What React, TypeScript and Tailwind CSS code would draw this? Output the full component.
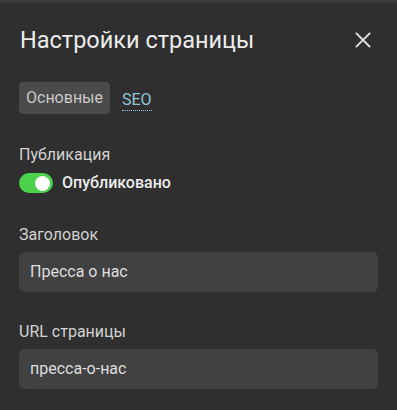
import React from "react";

export default function App() {
  return (
    <div className="w-[397px] h-[410px] bg-[#2f2f2f] overflow-hidden" style={{ fontFamily: "Roboto, 'Noto Sans', sans-serif" }}>
      <div className="h-[3px] bg-[#3a3a3a]" />
      <div className="px-[19px]">
        <div className="flex items-center justify-between pt-[21px] h-[52px]">
          <div className="text-[23.5px] leading-[28px] text-[#ececec] pl-[1px]">Настройки страницы</div>
          <button className="w-[16px] h-[16px] mr-[7px] text-[#e0e0e0]">
            <svg width="16" height="16" viewBox="0 0 16 16" fill="none" stroke="currentColor" strokeWidth="1.8" strokeLinecap="square">
              <path d="M1.5 1.5 L14.5 14.5 M14.5 1.5 L1.5 14.5" />
            </svg>
          </button>
        </div>
        <div className="flex items-center gap-[12px] mt-[27px]">
          <div className="h-[32px] px-[7px] flex items-center rounded-[4px] bg-[#4a4a4a] text-[16px] text-[#c9c9c9]">Основные</div>
          <div className="text-[16px] leading-[20px] text-[#8fc6d8] border-b border-dotted border-[#8fc6d8] mt-[4px]">SEO</div>
        </div>
        <div className="mt-[31px] text-[16px] leading-[20px] text-[#d2d2d2]">Публикация</div>
        <div className="mt-[8px] flex items-center gap-[9px] h-[20px]">
          <div className="w-[34px] h-[20px] rounded-full bg-[#4cd14c] flex items-center justify-end pr-[3px]">
            <div className="w-[15px] h-[15px] rounded-full bg-white" />
          </div>
          <div className="text-[16px] leading-[20px] font-medium text-[#ececec]">Опубликовано</div>
        </div>
        <div className="mt-[32px] text-[16px] leading-[20px] text-[#d2d2d2]">Заголовок</div>
        <div className="mt-[7px] h-[40px] rounded-[6px] bg-[#414141] flex items-center px-[11px] text-[16px] text-[#dedede]">Пресса о нас</div>
        <div className="mt-[30px] text-[16px] leading-[20px] text-[#d2d2d2]">URL страницы</div>
        <div className="mt-[7px] h-[40px] rounded-[6px] bg-[#414141] flex items-center px-[11px] text-[16px] text-[#dedede]">пресса-о-нас</div>
      </div>
    </div>
  );
}
